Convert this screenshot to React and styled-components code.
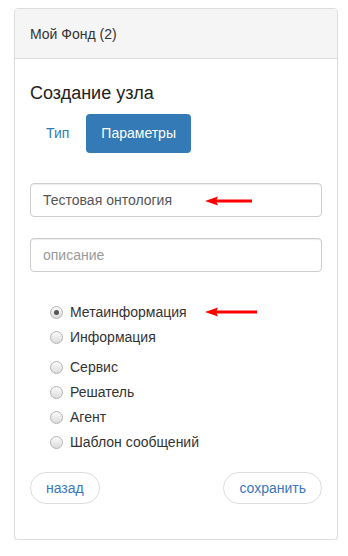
import React from "react";
import styled, { createGlobalStyle } from "styled-components";

const Global = createGlobalStyle`
  html, body { margin: 0; padding: 0; background: #fff; }
  body {
    font-family: "Liberation Sans", Arial, sans-serif;
    font-size: 14px;
    line-height: 20px;
    color: #333;
  }
  * { box-sizing: border-box; }
`;

const Page = styled.div`
  padding: 8px 10px 0 14px;
`;

const Panel = styled.div`
  border: 1px solid #ddd;
  border-radius: 4px;
  background: #fff;
  box-shadow: 0 1px 1px rgba(0, 0, 0, 0.08);
`;

const Header = styled.div`
  height: 50px;
  display: flex;
  align-items: center;
  padding: 0 15px;
  background: #f5f5f5;
  border-bottom: 1px solid #ddd;
  border-radius: 3px 3px 0 0;
  color: #333;
`;

const Body = styled.div`
  padding: 23px 15px 35px;
`;

const Title = styled.h3`
  margin: 0;
  font-size: 18px;
  line-height: 22px;
  font-weight: 400;
  color: #222;
`;

const Nav = styled.div`
  display: flex;
  gap: 2px;
  margin: 10px 0 0 1px;
`;

const Tab = styled.div`
  padding: 10px 15px;
  line-height: 19px;
  border-radius: 4px;
  color: ${(p) => (p.$active ? "#fff" : "#337ab7")};
  background: ${(p) => (p.$active ? "#337ab7" : "transparent")};
`;

const Field = styled.div`
  position: relative;
  margin-top: ${(p) => p.$mt}px;
`;

const Input = styled.div`
  height: 34px;
  padding: 6px 12px;
  border: 1px solid #ccc;
  border-radius: 4px;
  box-shadow: inset 0 1px 1px rgba(0, 0, 0, 0.075);
  color: ${(p) => (p.$placeholder ? "#999" : "#555")};
  line-height: 20px;
`;

const ArrowWrap = styled.div`
  position: absolute;
  left: ${(p) => p.$left}px;
  top: ${(p) => p.$top}px;
  width: ${(p) => p.$w}px;
  height: 12px;
  display: flex;
`;

const Radios = styled.div`
  margin-top: 30px;
  padding-left: 20px;
`;

const RadioRow = styled.div`
  position: relative;
  display: flex;
  align-items: center;
  height: 20px;
  margin-top: ${(p) => p.$mt}px;
`;

const Circle = styled.span`
  width: 13px;
  height: 13px;
  border-radius: 50%;
  border: 1px solid #b3b3b3;
  background: linear-gradient(#fafafa, #dcdcdc);
  display: flex;
  align-items: center;
  justify-content: center;
  margin-right: 7px;
  flex: none;
  &::after {
    content: "";
    width: 5px;
    height: 5px;
    border-radius: 50%;
    background: ${(p) => (p.$checked ? "#555" : "transparent")};
  }
`;

const Label = styled.span`
  color: #333;
`;

const Actions = styled.div`
  display: flex;
  justify-content: space-between;
  margin-top: 20px;
`;

const PillButton = styled.div`
  height: 32px;
  padding: 0 15px;
  border: 1px solid #ddd;
  border-radius: 16px;
  display: flex;
  align-items: center;
  color: #3a76bd;
  font-size: 14px;
`;

const Arrow = ({ w }) => (
  <svg width={w} height="12" viewBox={`0 0 ${w} 12`}>
    <rect x="8" y="4.5" width={w - 8} height="3" fill="#f00" />
    <polygon points={`0,6 13,1.5 11,6 13,10.5`} fill="#f00" />
  </svg>
);

const radios = [
  { label: "Метаинформация", checked: true, mt: 0, arrow: true },
  { label: "Информация", mt: 5 },
  { label: "Сервис", mt: 10 },
  { label: "Решатель", mt: 5 },
  { label: "Агент", mt: 5 },
  { label: "Шаблон сообщений", mt: 5 },
];

export default function App() {
  return (
    <>
      <Global />
      <Page>
        <Panel>
          <Header>Мой Фонд (2)</Header>
          <Body>
            <Title>Создание узла</Title>
            <Nav>
              <Tab>Тип</Tab>
              <Tab $active>Параметры</Tab>
            </Nav>
            <Field $mt={30}>
              <Input>Тестовая онтология</Input>
              <ArrowWrap $left={175} $top={12} $w={47}>
                <Arrow w={47} />
              </ArrowWrap>
            </Field>
            <Field $mt={21}>
              <Input $placeholder>описание</Input>
            </Field>
            <Radios>
              {radios.map((r) => (
                <RadioRow key={r.label} $mt={r.mt}>
                  <Circle $checked={r.checked} />
                  <Label>{r.label}</Label>
                  {r.arrow && (
                    <ArrowWrap $left={155} $top={4} $w={52}>
                      <Arrow w={52} />
                    </ArrowWrap>
                  )}
                </RadioRow>
              ))}
            </Radios>
            <Actions>
              <PillButton>назад</PillButton>
              <PillButton>сохранить</PillButton>
            </Actions>
          </Body>
        </Panel>
      </Page>
    </>
  );
}
